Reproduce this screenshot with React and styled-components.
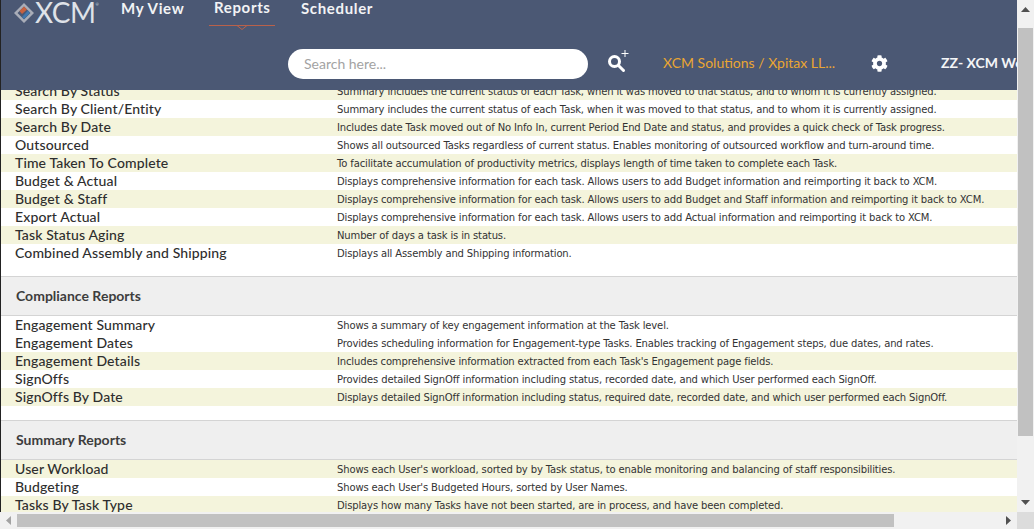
import React from "react";
import styled, { createGlobalStyle } from "styled-components";
import { FaCog } from "react-icons/fa";

const Global = createGlobalStyle`
  html, body { margin: 0; padding: 0; height: 100%; overflow: hidden; background: #fff; }
  #root { height: 100%; }
`;

const Page = styled.div`
  display: grid;
  grid-template-columns: 1017px 17px;
  grid-template-rows: 512px 17px;
  width: 1034px;
  height: 529px;
  font-family: Lato, sans-serif;
`;
const Main = styled.div`
  display: flex;
  flex-direction: column;
  overflow: hidden;
  border-left: 1px solid #222;
`;
const Header = styled.header`
  position: relative;
  z-index: 2;
  flex: 0 0 90px;
  background: #4b5874;
  overflow: hidden;
  display: flex;
  flex-direction: column;
  white-space: nowrap;
`;
const TopBar = styled.div`
  display: flex;
  flex: none;
  height: 49px;
  padding-left: 13px;
`;
const LogoWrap = styled.div`
  display: flex;
  align-items: flex-start;
  width: 107px;
  flex: none;
`;
const LogoText = styled.span`
  font-family: Lato, sans-serif;
  font-weight: 400;
  font-size: 28px;
  line-height: 25px;
  color: #dfe2e8;
  letter-spacing: -0.5px;
  margin-left: 1px;
`;
const LogoReg = styled.span`
  font-size: 4px;
  line-height: 10px;
  color: #dfe2e8;
`;
const LogoMark = styled.svg`
  flex: none;
  margin-top: 3px;
`;
const Nav = styled.nav`
  display: flex;
`;
const NavItem = styled.a`
  position: relative;
  font-weight: 700;
  font-size: 15px;
  letter-spacing: 0.65px;
  line-height: 16px;
  color: #f2f3f5;
  width: ${p => p.$w}px;
  margin-top: ${p => (p.$active ? -1 : 0)}px;
`;
const Underline = styled.span`
  position: absolute;
  left: -5px;
  top: 26px;
  width: 66px;
  height: 1px;
  background: #b9614a;
`;
const Chevron = styled.svg`
  position: absolute;
  left: 21px;
  top: 26px;
`;
const Tools = styled.div`
  display: flex;
  flex: none;
  align-items: center;
  height: 30px;
  padding-left: 287px;
`;
const Search = styled.input`
  box-sizing: border-box;
  flex: none;
  width: 300px;
  height: 30px;
  border: none;
  border-radius: 15px;
  padding: 0 16px 2px;
  background: #fff;
  font-family: Lato, sans-serif;
  font-size: 14px;
  outline: none;
  &::placeholder { color: #a3a3a3; opacity: 1; }
`;
const SearchIcon = styled.svg`
  margin-left: 20px;
  margin-top: -3px;
  flex: none;
`;
const Company = styled.span`
  width: 208px;
  margin-left: 32px;
  margin-top: -4px;
  flex: none;
  font-size: 14px;
  color: #eaa632;
`;
const Gear = styled(FaCog)`
  flex: none;
  color: #fff;
  font-size: 17px;
  margin-top: -2px;
`;
const User = styled.span`
  margin-left: 53px;
  margin-top: -4px;
  flex: none;
  font-size: 14px;
  font-weight: 700;
  color: #f4f5f7;
`;
const Content = styled.div`
  flex: 1;
  min-height: 0;
  overflow: hidden;
  background: #fff;
`;
const Inner = styled.div`
  margin-top: -8px;
`;
const Row = styled.div`
  display: flex;
  height: 18px;
  align-items: center;
  padding-left: 14px;
  background: ${p => (p.$alt ? "#f4f4dc" : "#fff")};
  white-space: nowrap;
`;
const Name = styled.div`
  width: 322px;
  flex: none;
  font-size: 14px;
  line-height: 16px;
  font-weight: 500;
  letter-spacing: 0.13px;
  color: #2e2e2e;
`;
const Desc = styled.div`
  font-family: "DejaVu Sans", sans-serif;
  font-size: 10px;
  letter-spacing: -0.14px;
  color: #333;
`;
const Section = styled.div`
  box-sizing: border-box;
  height: 40px;
  margin-top: ${p => p.$gap}px;
  display: flex;
  align-items: center;
  padding-left: 15px;
  background: #efefef;
  border-top: 1px solid #d4d4d4;
  border-bottom: 1px solid #d4d4d4;
  font-size: 14px;
  line-height: 16px;
  font-weight: 700;
  color: #3d3d3d;
`;
const VBar = styled.div`
  display: flex;
  flex-direction: column;
  background: #f1f1f1;
`;
const VThumb = styled.div`
  height: 408px;
  margin: 10px 1px 0;
  background: #c1c1c1;
`;
const Spacer = styled.div`
  flex: 1;
`;
const Arrow = styled.div`
  flex: none;
  height: ${p => p.$h}px;
  display: flex;
  align-items: center;
  justify-content: center;
`;
const HBar = styled.div`
  display: flex;
  align-items: center;
  background: #f1f1f1;
`;
const HThumb = styled.div`
  width: 877px;
  height: 13px;
  margin-left: 6px;
  background: #c1c1c1;
`;
const Corner = styled.div`
  background: #dcdcdc;
`;
const HArrow = styled.svg`
  flex: none;
  margin-left: ${p => p.$ml}px;
`;

const sections = [
  { rows: [
    ["Search By Status", "Summary includes the current status of each Task, when it was moved to that status, and to whom it is currently assigned.", 1],
    ["Search By Client/Entity", "Summary includes the current status of each Task, when it was moved to that status, and to whom it is currently assigned.", 0],
    ["Search By Date", "Includes date Task moved out of No Info In, current Period End Date and status, and provides a quick check of Task progress.", 1],
    ["Outsourced", "Shows all outsourced Tasks regardless of current status. Enables monitoring of outsourced workflow and turn-around time.", 0],
    ["Time Taken To Complete", "To facilitate accumulation of productivity metrics, displays length of time taken to complete each Task.", 1],
    ["Budget & Actual", "Displays comprehensive information for each task. Allows users to add Budget information and reimporting it back to XCM.", 0],
    ["Budget & Staff", "Displays comprehensive information for each task. Allows users to add Budget and Staff information and reimporting it back to XCM.", 1],
    ["Export Actual", "Displays comprehensive information for each task. Allows users to add Actual information and reimporting it back to XCM.", 0],
    ["Task Status Aging", "Number of days a task is in status.", 1],
    ["Combined Assembly and Shipping", "Displays all Assembly and Shipping information.", 0],
  ]},
  { title: "Compliance Reports", rows: [
    ["Engagement Summary", "Shows a summary of key engagement information at the Task level.", 0],
    ["Engagement Dates", "Provides scheduling information for Engagement-type Tasks. Enables tracking of Engagement steps, due dates, and rates.", 0],
    ["Engagement Details", "Includes comprehensive information extracted from each Task's Engagement page fields.", 1],
    ["SignOffs", "Provides detailed SignOff information including status, recorded date, and which User performed each SignOff.", 0],
    ["SignOffs By Date", "Displays detailed SignOff information including status, required date, recorded date, and which user performed each SignOff.", 1],
  ]},
  { title: "Summary Reports", rows: [
    ["User Workload", "Shows each User's workload, sorted by by Task status, to enable monitoring and balancing of staff responsibilities.", 1],
    ["Budgeting", "Shows each User's Budgeted Hours, sorted by User Names.", 0],
    ["Tasks By Task Type", "Displays how many Tasks have not been started, are in process, and have been completed.", 1],
  ]},
];

const Diamond = () => (
  <LogoMark width="20" height="20" viewBox="0 0 20 20">
    <path d="M10 0 L20 10 L10 20 L0 10 Z M10 3.5 L3.5 10 L10 16.5 L16.5 10 Z" fill="#a9adb8" fillRule="evenodd" />
    <path d="M10 3.5 L13 6.5 L8 11 L5.5 8 Z" fill="#c8613f" />
    <path d="M14 7.5 L16 10 L10 16 L8 14 Z" fill="#3f78b0" />
  </LogoMark>
);

export default function App() {
  return (
    <Page>
      <Global />
      <Main>
        <Header>
          <TopBar>
            <LogoWrap>
              <Diamond />
              <LogoText>XCM</LogoText>
              <LogoReg>®</LogoReg>
            </LogoWrap>
            <Nav>
              <NavItem $w={93}>My View</NavItem>
              <NavItem $w={87} $active>
                Reports
                <Underline />
                <Chevron width="14" height="6" viewBox="0 0 14 6">
                  <path d="M2 0.5 L7 4.5 L12 0.5" fill="none" stroke="#b9614a" />
                </Chevron>
              </NavItem>
              <NavItem $w={90}>Scheduler</NavItem>
            </Nav>
          </TopBar>
          <Tools>
            <Search placeholder="Search here..." />
            <SearchIcon width="23" height="25" viewBox="0 0 23 25">
              <circle cx="6.5" cy="11.5" r="5" fill="none" stroke="#fff" strokeWidth="3" />
              <path d="M10.5 15.5 L15.5 20.5" stroke="#fff" strokeWidth="3" strokeLinecap="round" />
              <path d="M17 0 V7 M13.5 3.5 H20.5" stroke="#fff" strokeWidth="1" />
            </SearchIcon>
            <Company>XCM Solutions / Xpitax LL...</Company>
            <Gear />
            <User>ZZ- XCM Web User</User>
          </Tools>
        </Header>
        <Content>
          <Inner>
            {sections.map((s, i) => (
              <React.Fragment key={i}>
                {s.title && <Section $gap={14}>{s.title}</Section>}
                {s.rows.map(([n, d, alt]) => (
                  <Row key={n} $alt={alt}>
                    <Name>{n}</Name>
                    <Desc>{d}</Desc>
                  </Row>
                ))}
              </React.Fragment>
            ))}
          </Inner>
        </Content>
      </Main>
      <VBar>
        <Arrow $h={18}>
          <svg width="9" height="5" viewBox="0 0 9 5"><path d="M4.5 0 L9 5 H0 Z" fill="#505050" /></svg>
        </Arrow>
        <VThumb />
        <Spacer />
        <Arrow $h={20}>
          <svg width="9" height="5" viewBox="0 0 9 5"><path d="M0 0 H9 L4.5 5 Z" fill="#505050" /></svg>
        </Arrow>
      </VBar>
      <HBar>
        <HArrow $ml={6} width="5" height="9" viewBox="0 0 5 9"><path d="M5 0 L0 4.5 L5 9 Z" fill="#a3a3a3" /></HArrow>
        <HThumb />
        <HArrow $ml={112} width="5" height="9" viewBox="0 0 5 9"><path d="M0 0 L5 4.5 L0 9 Z" fill="#505050" /></HArrow>
      </HBar>
      <Corner />
    </Page>
  );
}
